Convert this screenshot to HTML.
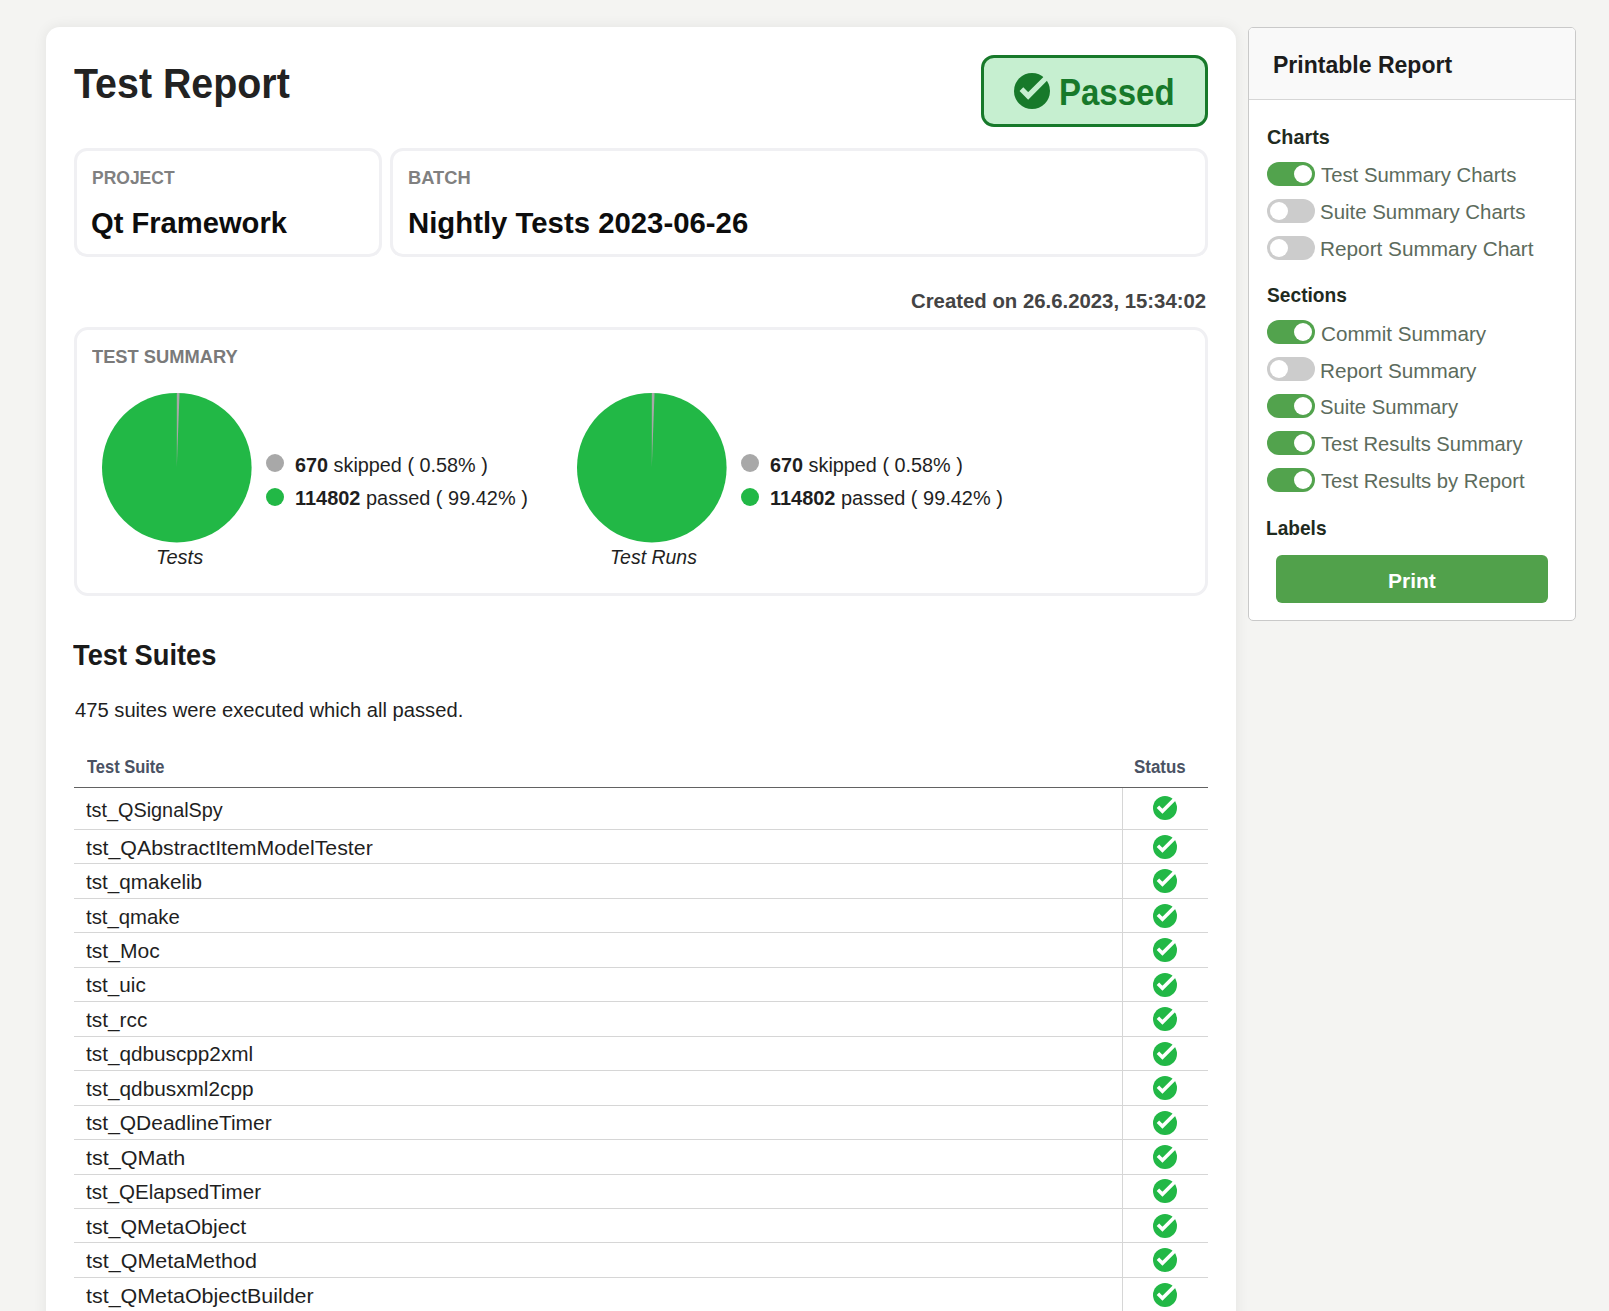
<!DOCTYPE html><html><head><meta charset="utf-8"><style>*{margin:0;padding:0;box-sizing:border-box}html,body{width:1609px;height:1311px;overflow:hidden;background:#f4f4f2;font-family:"Liberation Sans",sans-serif}.a{position:absolute;line-height:1;white-space:nowrap;transform-origin:0 0}.a b{font-weight:bold}</style></head><body>
<div style="position:absolute;left:46px;top:27px;width:1190px;height:1400px;background:#fff;border-radius:14px;box-shadow:0 0 14px rgba(0,0,0,.075)"></div>
<div style="position:absolute;left:981px;top:55px;width:227px;height:72px;border:3px solid #17792a;border-radius:13px;background:#c6efd0"></div>
<svg style="position:absolute;left:1014.40px;top:73.00px;overflow:visible" width="36" height="36" viewBox="0 0 24 24"><circle cx="12" cy="12" r="12" fill="#17792a"/><path d="M4.94 10.8 L9.44 15.3 L23.2 1.5" stroke="#c6efd0" stroke-width="3.5" fill="none" stroke-linejoin="miter" stroke-linecap="butt"/></svg>
<div style="position:absolute;left:74px;top:148px;width:308px;height:109px;border:3px solid #f0f0f3;border-radius:13px"></div>
<div style="position:absolute;left:390px;top:148px;width:818px;height:109px;border:3px solid #f0f0f3;border-radius:13px"></div>
<div style="position:absolute;left:74px;top:327px;width:1134px;height:269px;border:3px solid #f0f0f3;border-radius:14px"></div>
<svg style="position:absolute;left:0;top:0" width="1609" height="700"><circle cx="176.8" cy="467.7" r="74.8" fill="#22b846"/><path d="M176.8 467.7 L176.8 392.9 A74.8 74.8 0 0 1 179.53 392.95 Z" fill="#a8a8a8"/></svg>
<div style="position:absolute;left:266px;top:454px;width:18px;height:18px;border-radius:50%;background:#a8a8a8"></div>
<div style="position:absolute;left:266px;top:488px;width:18px;height:18px;border-radius:50%;background:#22b846"></div>
<svg style="position:absolute;left:0;top:0" width="1609" height="700"><circle cx="651.8" cy="467.7" r="74.8" fill="#22b846"/><path d="M651.8 467.7 L651.8 392.9 A74.8 74.8 0 0 1 654.53 392.95 Z" fill="#a8a8a8"/></svg>
<div style="position:absolute;left:741px;top:454px;width:18px;height:18px;border-radius:50%;background:#a8a8a8"></div>
<div style="position:absolute;left:741px;top:488px;width:18px;height:18px;border-radius:50%;background:#22b846"></div>
<div style="position:absolute;left:74px;top:787px;width:1134px;height:1px;background:#626262"></div>
<div style="position:absolute;left:1122px;top:788px;width:1px;height:600px;background:#d6d6d6"></div>
<div style="position:absolute;left:74px;top:829.00px;width:1134px;height:1px;background:#d6d6d6"></div>
<div style="position:absolute;left:74px;top:863.45px;width:1134px;height:1px;background:#d6d6d6"></div>
<div style="position:absolute;left:74px;top:897.90px;width:1134px;height:1px;background:#d6d6d6"></div>
<div style="position:absolute;left:74px;top:932.35px;width:1134px;height:1px;background:#d6d6d6"></div>
<div style="position:absolute;left:74px;top:966.80px;width:1134px;height:1px;background:#d6d6d6"></div>
<div style="position:absolute;left:74px;top:1001.25px;width:1134px;height:1px;background:#d6d6d6"></div>
<div style="position:absolute;left:74px;top:1035.70px;width:1134px;height:1px;background:#d6d6d6"></div>
<div style="position:absolute;left:74px;top:1070.15px;width:1134px;height:1px;background:#d6d6d6"></div>
<div style="position:absolute;left:74px;top:1104.60px;width:1134px;height:1px;background:#d6d6d6"></div>
<div style="position:absolute;left:74px;top:1139.05px;width:1134px;height:1px;background:#d6d6d6"></div>
<div style="position:absolute;left:74px;top:1173.50px;width:1134px;height:1px;background:#d6d6d6"></div>
<div style="position:absolute;left:74px;top:1207.95px;width:1134px;height:1px;background:#d6d6d6"></div>
<div style="position:absolute;left:74px;top:1242.40px;width:1134px;height:1px;background:#d6d6d6"></div>
<div style="position:absolute;left:74px;top:1276.85px;width:1134px;height:1px;background:#d6d6d6"></div>
<svg style="position:absolute;left:1153.40px;top:795.90px;overflow:visible" width="24" height="24" viewBox="0 0 24 24"><circle cx="12" cy="12" r="12" fill="#22b846"/><path d="M4.94 10.8 L9.44 15.3 L23.2 1.5" stroke="#fff" stroke-width="3.5" fill="none" stroke-linejoin="miter" stroke-linecap="butt"/></svg>
<svg style="position:absolute;left:1153.40px;top:834.90px;overflow:visible" width="24" height="24" viewBox="0 0 24 24"><circle cx="12" cy="12" r="12" fill="#22b846"/><path d="M4.94 10.8 L9.44 15.3 L23.2 1.5" stroke="#fff" stroke-width="3.5" fill="none" stroke-linejoin="miter" stroke-linecap="butt"/></svg>
<svg style="position:absolute;left:1153.40px;top:869.35px;overflow:visible" width="24" height="24" viewBox="0 0 24 24"><circle cx="12" cy="12" r="12" fill="#22b846"/><path d="M4.94 10.8 L9.44 15.3 L23.2 1.5" stroke="#fff" stroke-width="3.5" fill="none" stroke-linejoin="miter" stroke-linecap="butt"/></svg>
<svg style="position:absolute;left:1153.40px;top:903.80px;overflow:visible" width="24" height="24" viewBox="0 0 24 24"><circle cx="12" cy="12" r="12" fill="#22b846"/><path d="M4.94 10.8 L9.44 15.3 L23.2 1.5" stroke="#fff" stroke-width="3.5" fill="none" stroke-linejoin="miter" stroke-linecap="butt"/></svg>
<svg style="position:absolute;left:1153.40px;top:938.25px;overflow:visible" width="24" height="24" viewBox="0 0 24 24"><circle cx="12" cy="12" r="12" fill="#22b846"/><path d="M4.94 10.8 L9.44 15.3 L23.2 1.5" stroke="#fff" stroke-width="3.5" fill="none" stroke-linejoin="miter" stroke-linecap="butt"/></svg>
<svg style="position:absolute;left:1153.40px;top:972.70px;overflow:visible" width="24" height="24" viewBox="0 0 24 24"><circle cx="12" cy="12" r="12" fill="#22b846"/><path d="M4.94 10.8 L9.44 15.3 L23.2 1.5" stroke="#fff" stroke-width="3.5" fill="none" stroke-linejoin="miter" stroke-linecap="butt"/></svg>
<svg style="position:absolute;left:1153.40px;top:1007.15px;overflow:visible" width="24" height="24" viewBox="0 0 24 24"><circle cx="12" cy="12" r="12" fill="#22b846"/><path d="M4.94 10.8 L9.44 15.3 L23.2 1.5" stroke="#fff" stroke-width="3.5" fill="none" stroke-linejoin="miter" stroke-linecap="butt"/></svg>
<svg style="position:absolute;left:1153.40px;top:1041.60px;overflow:visible" width="24" height="24" viewBox="0 0 24 24"><circle cx="12" cy="12" r="12" fill="#22b846"/><path d="M4.94 10.8 L9.44 15.3 L23.2 1.5" stroke="#fff" stroke-width="3.5" fill="none" stroke-linejoin="miter" stroke-linecap="butt"/></svg>
<svg style="position:absolute;left:1153.40px;top:1076.05px;overflow:visible" width="24" height="24" viewBox="0 0 24 24"><circle cx="12" cy="12" r="12" fill="#22b846"/><path d="M4.94 10.8 L9.44 15.3 L23.2 1.5" stroke="#fff" stroke-width="3.5" fill="none" stroke-linejoin="miter" stroke-linecap="butt"/></svg>
<svg style="position:absolute;left:1153.40px;top:1110.50px;overflow:visible" width="24" height="24" viewBox="0 0 24 24"><circle cx="12" cy="12" r="12" fill="#22b846"/><path d="M4.94 10.8 L9.44 15.3 L23.2 1.5" stroke="#fff" stroke-width="3.5" fill="none" stroke-linejoin="miter" stroke-linecap="butt"/></svg>
<svg style="position:absolute;left:1153.40px;top:1144.95px;overflow:visible" width="24" height="24" viewBox="0 0 24 24"><circle cx="12" cy="12" r="12" fill="#22b846"/><path d="M4.94 10.8 L9.44 15.3 L23.2 1.5" stroke="#fff" stroke-width="3.5" fill="none" stroke-linejoin="miter" stroke-linecap="butt"/></svg>
<svg style="position:absolute;left:1153.40px;top:1179.40px;overflow:visible" width="24" height="24" viewBox="0 0 24 24"><circle cx="12" cy="12" r="12" fill="#22b846"/><path d="M4.94 10.8 L9.44 15.3 L23.2 1.5" stroke="#fff" stroke-width="3.5" fill="none" stroke-linejoin="miter" stroke-linecap="butt"/></svg>
<svg style="position:absolute;left:1153.40px;top:1213.85px;overflow:visible" width="24" height="24" viewBox="0 0 24 24"><circle cx="12" cy="12" r="12" fill="#22b846"/><path d="M4.94 10.8 L9.44 15.3 L23.2 1.5" stroke="#fff" stroke-width="3.5" fill="none" stroke-linejoin="miter" stroke-linecap="butt"/></svg>
<svg style="position:absolute;left:1153.40px;top:1248.30px;overflow:visible" width="24" height="24" viewBox="0 0 24 24"><circle cx="12" cy="12" r="12" fill="#22b846"/><path d="M4.94 10.8 L9.44 15.3 L23.2 1.5" stroke="#fff" stroke-width="3.5" fill="none" stroke-linejoin="miter" stroke-linecap="butt"/></svg>
<svg style="position:absolute;left:1153.40px;top:1282.75px;overflow:visible" width="24" height="24" viewBox="0 0 24 24"><circle cx="12" cy="12" r="12" fill="#22b846"/><path d="M4.94 10.8 L9.44 15.3 L23.2 1.5" stroke="#fff" stroke-width="3.5" fill="none" stroke-linejoin="miter" stroke-linecap="butt"/></svg>
<div style="position:absolute;left:1248px;top:27px;width:328px;height:594px;background:#fff;border:1px solid #c9c9c9;border-radius:5px;overflow:hidden"><div style="position:absolute;left:0;top:0;width:100%;height:72px;background:#f9f9f9;border-bottom:1px solid #d6d6d6"></div></div>
<div style="position:absolute;left:1267px;top:162px;width:48px;height:24px;border-radius:12px;background:#52a34d"><div style="position:absolute;left:27px;top:2.8px;width:18.4px;height:18.4px;border-radius:50%;background:#fff"></div></div>
<div style="position:absolute;left:1267px;top:199px;width:48px;height:24px;border-radius:12px;background:#cccccc"><div style="position:absolute;left:2.6px;top:2.8px;width:18.4px;height:18.4px;border-radius:50%;background:#fff"></div></div>
<div style="position:absolute;left:1267px;top:236px;width:48px;height:24px;border-radius:12px;background:#cccccc"><div style="position:absolute;left:2.6px;top:2.8px;width:18.4px;height:18.4px;border-radius:50%;background:#fff"></div></div>
<div style="position:absolute;left:1267px;top:320px;width:48px;height:24px;border-radius:12px;background:#52a34d"><div style="position:absolute;left:27px;top:2.8px;width:18.4px;height:18.4px;border-radius:50%;background:#fff"></div></div>
<div style="position:absolute;left:1267px;top:357px;width:48px;height:24px;border-radius:12px;background:#cccccc"><div style="position:absolute;left:2.6px;top:2.8px;width:18.4px;height:18.4px;border-radius:50%;background:#fff"></div></div>
<div style="position:absolute;left:1267px;top:394px;width:48px;height:24px;border-radius:12px;background:#52a34d"><div style="position:absolute;left:27px;top:2.8px;width:18.4px;height:18.4px;border-radius:50%;background:#fff"></div></div>
<div style="position:absolute;left:1267px;top:431px;width:48px;height:24px;border-radius:12px;background:#52a34d"><div style="position:absolute;left:27px;top:2.8px;width:18.4px;height:18.4px;border-radius:50%;background:#fff"></div></div>
<div style="position:absolute;left:1267px;top:468px;width:48px;height:24px;border-radius:12px;background:#52a34d"><div style="position:absolute;left:27px;top:2.8px;width:18.4px;height:18.4px;border-radius:50%;background:#fff"></div></div>
<div style="position:absolute;left:1276px;top:555px;width:272px;height:48px;background:#51a14b;border-radius:6px"></div>
<div class="a" id="t0" style="left:73.66px;top:62.49px;font-size:43px;color:#222;font-weight:bold;transform:scaleX(0.9153);">Test Report</div>
<div class="a" id="t1" style="left:91.51px;top:167.73px;font-size:19.1px;color:#808080;font-weight:bold;transform:scaleX(0.9157);">PROJECT</div>
<div class="a" id="t2" style="left:91.45px;top:208.24px;font-size:30.3px;color:#0d0d0d;font-weight:bold;transform:scaleX(0.9619);">Qt Framework</div>
<div class="a" id="t3" style="left:408.04px;top:167.73px;font-size:19.1px;color:#808080;font-weight:bold;transform:scaleX(0.9587);">BATCH</div>
<div class="a" id="t4" style="left:407.85px;top:208.24px;font-size:30.3px;color:#0d0d0d;font-weight:bold;transform:scaleX(0.9682);">Nightly Tests 2023-06-26</div>
<div class="a" id="t5" style="left:911.41px;top:290.54px;font-size:20.5px;color:#444;font-weight:bold;transform:scaleX(0.9922);">Created on 26.6.2023, 15:34:02</div>
<div class="a" id="t6" style="left:1058.78px;top:75.42px;font-size:36px;color:#17792a;font-weight:bold;transform:scaleX(0.9164);">Passed</div>
<div class="a" id="t7" style="left:92.00px;top:346.73px;font-size:19.1px;color:#7a7a7a;font-weight:bold;transform:scaleX(0.9579);">TEST SUMMARY</div>
<div class="a" id="t8" style="left:295.41px;top:454.54px;font-size:20.5px;color:#1f1f1f;transform:scaleX(0.9667);"><b>670</b> skipped ( 0.58% )</div>
<div class="a" id="t9" style="left:295.04px;top:488.04px;font-size:20.5px;color:#1f1f1f;transform:scaleX(0.9730);"><b>114802</b> passed ( 99.42% )</div>
<div class="a" id="t10" style="left:770.41px;top:454.54px;font-size:20.5px;color:#1f1f1f;transform:scaleX(0.9667);"><b>670</b> skipped ( 0.58% )</div>
<div class="a" id="t11" style="left:770.04px;top:488.04px;font-size:20.5px;color:#1f1f1f;transform:scaleX(0.9730);"><b>114802</b> passed ( 99.42% )</div>
<div class="a" id="t12" style="left:155.64px;top:547.24px;font-size:20.5px;color:#1f1f1f;font-style:italic;transform:scaleX(0.9783);">Tests</div>
<div class="a" id="t13" style="left:610.27px;top:547.24px;font-size:20.5px;color:#1f1f1f;font-style:italic;transform:scaleX(0.9489);">Test Runs</div>
<div class="a" id="t14" style="left:73.48px;top:640.24px;font-size:30.3px;color:#1a1a1a;font-weight:bold;transform:scaleX(0.9000);">Test Suites</div>
<div class="a" id="t15" style="left:75.00px;top:699.54px;font-size:20.5px;color:#1f1f1f;transform:scaleX(0.9847);">475 suites were executed which all passed.</div>
<div class="a" id="t16" style="left:87.19px;top:756.73px;font-size:19.1px;color:#4a5263;font-weight:bold;transform:scaleX(0.8629);">Test Suite</div>
<div class="a" id="t17" style="left:1134.11px;top:756.73px;font-size:19.1px;color:#4a5263;font-weight:bold;transform:scaleX(0.8860);">Status</div>
<div class="a" id="t18" style="left:86.41px;top:799.54px;font-size:20.5px;color:#1f1f1f;transform:scaleX(0.9681);">tst_QSignalSpy</div>
<div class="a" id="t19" style="left:86.39px;top:838.34px;font-size:20.5px;color:#1f1f1f;transform:scaleX(1.0400);">tst_QAbstractItemModelTester</div>
<div class="a" id="t20" style="left:86.40px;top:871.79px;font-size:20.5px;color:#1f1f1f;transform:scaleX(1.0088);">tst_qmakelib</div>
<div class="a" id="t21" style="left:86.40px;top:907.24px;font-size:20.5px;color:#1f1f1f;transform:scaleX(0.9925);">tst_qmake</div>
<div class="a" id="t22" style="left:86.39px;top:940.69px;font-size:20.5px;color:#1f1f1f;transform:scaleX(1.0268);">tst_Moc</div>
<div class="a" id="t23" style="left:86.40px;top:975.14px;font-size:20.5px;color:#1f1f1f;transform:scaleX(1.0086);">tst_uic</div>
<div class="a" id="t24" style="left:86.40px;top:1009.59px;font-size:20.5px;color:#1f1f1f;transform:scaleX(1.0153);">tst_rcc</div>
<div class="a" id="t25" style="left:86.40px;top:1044.04px;font-size:20.5px;color:#1f1f1f;transform:scaleX(1.0116);">tst_qdbuscpp2xml</div>
<div class="a" id="t26" style="left:86.40px;top:1079.49px;font-size:20.5px;color:#1f1f1f;transform:scaleX(1.0140);">tst_qdbusxml2cpp</div>
<div class="a" id="t27" style="left:86.39px;top:1112.94px;font-size:20.5px;color:#1f1f1f;transform:scaleX(1.0232);">tst_QDeadlineTimer</div>
<div class="a" id="t28" style="left:86.38px;top:1148.39px;font-size:20.5px;color:#1f1f1f;transform:scaleX(1.0505);">tst_QMath</div>
<div class="a" id="t29" style="left:86.40px;top:1181.84px;font-size:20.5px;color:#1f1f1f;transform:scaleX(1.0017);">tst_QElapsedTimer</div>
<div class="a" id="t30" style="left:86.39px;top:1217.29px;font-size:20.5px;color:#1f1f1f;transform:scaleX(1.0412);">tst_QMetaObject</div>
<div class="a" id="t31" style="left:86.39px;top:1250.74px;font-size:20.5px;color:#1f1f1f;transform:scaleX(1.0488);">tst_QMetaMethod</div>
<div class="a" id="t32" style="left:86.39px;top:1286.19px;font-size:20.5px;color:#1f1f1f;transform:scaleX(1.0461);">tst_QMetaObjectBuilder</div>
<div class="a" id="t33" style="left:1273.10px;top:52.99px;font-size:24.7px;color:#1c1c1c;font-weight:bold;transform:scaleX(0.9326);">Printable Report</div>
<div class="a" id="t34" style="left:1267.02px;top:127.14px;font-size:20.5px;color:#1f2b1f;font-weight:bold;transform:scaleX(0.9672);">Charts</div>
<div class="a" id="t35" style="left:1267.03px;top:284.64px;font-size:20.5px;color:#1f2b1f;font-weight:bold;transform:scaleX(0.9357);">Sections</div>
<div class="a" id="t36" style="left:1266.10px;top:517.54px;font-size:20.5px;color:#1f2b1f;font-weight:bold;transform:scaleX(0.9317);">Labels</div>
<div class="a" id="t37" style="left:1321.00px;top:165.34px;font-size:20.5px;color:#5c6b5c;transform:scaleX(0.9913);">Test Summary Charts</div>
<div class="a" id="t38" style="left:1320.01px;top:202.34px;font-size:20.5px;color:#5c6b5c;transform:scaleX(0.9966);">Suite Summary Charts</div>
<div class="a" id="t39" style="left:1319.98px;top:239.34px;font-size:20.5px;color:#5c6b5c;transform:scaleX(1.0129);">Report Summary Chart</div>
<div class="a" id="t40" style="left:1321.00px;top:324.24px;font-size:20.5px;color:#5c6b5c;transform:scaleX(1.0067);">Commit Summary</div>
<div class="a" id="t41" style="left:1319.99px;top:361.14px;font-size:20.5px;color:#5c6b5c;transform:scaleX(1.0098);">Report Summary</div>
<div class="a" id="t42" style="left:1320.02px;top:396.94px;font-size:20.5px;color:#5c6b5c;transform:scaleX(0.9863);">Suite Summary</div>
<div class="a" id="t43" style="left:1321.01px;top:433.84px;font-size:20.5px;color:#5c6b5c;transform:scaleX(0.9828);">Test Results Summary</div>
<div class="a" id="t44" style="left:1321.01px;top:470.54px;font-size:20.5px;color:#5c6b5c;transform:scaleX(0.9869);">Test Results by Report</div>
<div class="a" id="t45" style="left:1388.17px;top:570.54px;font-size:20.5px;color:#fff;font-weight:bold;transform:scaleX(1.0222);">Print</div>
</body></html>
